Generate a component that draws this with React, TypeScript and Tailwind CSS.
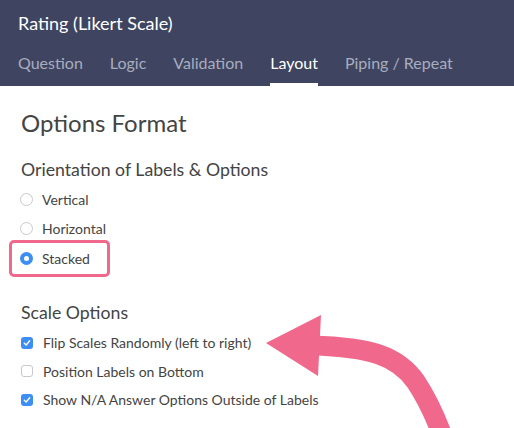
import React from 'react';

const tabs = ['Question', 'Logic', 'Validation', 'Layout', 'Piping / Repeat'];

const Radio = ({ checked = false }: { checked?: boolean }) =>
  checked ? (
    <span className="w-[13px] h-[13px] rounded-full bg-[#3c8ef2] flex items-center justify-center">
      <span className="w-[5px] h-[5px] rounded-full bg-white" />
    </span>
  ) : (
    <span className="w-[13px] h-[13px] rounded-full border border-[#c9c9c9] bg-white" />
  );

const Check = ({ checked = false }: { checked?: boolean }) =>
  checked ? (
    <span className="w-[12px] h-[12px] rounded-[3px] bg-[#3c8ef2] flex items-center justify-center">
      <svg width="8" height="8" viewBox="0 0 8 8" fill="none">
        <path d="M1.3 4.2 L3.2 6 L6.7 1.8" stroke="white" strokeWidth="1.4" strokeLinecap="round" strokeLinejoin="round" />
      </svg>
    </span>
  ) : (
    <span className="w-[12px] h-[12px] rounded-[3px] border border-[#c9c9c9] bg-white" />
  );

export default function App() {
  return (
    <div className="relative w-[514px] h-[428px] overflow-hidden bg-white font-['Lato','Liberation_Sans',sans-serif]">
      <div className="bg-[#3f4560] px-[18px] pt-[12px] h-[86px]">
        <div className="text-white text-[18px] leading-[23px]">Rating (Likert Scale)</div>
        <div className="flex gap-[27px] mt-[17px] text-[16px] leading-[22px]">
          {tabs.map((t) => (
            <div
              key={t}
              className={`pb-[9px] border-b-[3px] ${t === 'Layout' ? 'border-white text-white' : 'border-transparent text-[#a7adbf]'}`}
            >
              {t}
            </div>
          ))}
        </div>
      </div>

      <div className="px-[21px] pt-[23px] text-[#444]">
        <div className="text-[24px] leading-[28px]">Options Format</div>
        <div className="text-[17.7px] leading-[24px] mt-[21px]">Orientation of Labels &amp; Options</div>
        <div className="mt-[2px] text-[14px]">
          <div className="flex items-center gap-[9px] h-[30px] -ml-px">
            <Radio />
            <span>Vertical</span>
          </div>
          <div className="flex items-center gap-[9px] h-[29px] -ml-px">
            <Radio />
            <span>Horizontal</span>
          </div>
          <div className="relative flex items-center gap-[9px] h-[30px] -ml-px">
            <Radio checked />
            <span>Stacked</span>
            <span className="absolute left-[-11px] top-[-3px] w-[101px] h-[37px] border-[3px] border-[#f0698c] rounded-[5px]" />
          </div>
        </div>
        <div className="text-[17.7px] leading-[24px] mt-[28px]">Scale Options</div>
        <div className="mt-[3px] text-[14px]">
          <div className="flex items-center gap-[10px] h-[29px]">
            <Check checked />
            <span>Flip Scales Randomly (left to right)</span>
          </div>
          <div className="flex items-center gap-[10px] h-[28px]">
            <Check />
            <span>Position Labels on Bottom</span>
          </div>
          <div className="flex items-center gap-[10px] h-[29px]">
            <Check checked />
            <span>Show N/A Answer Options Outside of Labels</span>
          </div>
        </div>
      </div>

      <svg className="absolute inset-0 pointer-events-none" width="514" height="428" viewBox="0 0 514 428">
        <path d="M312 345.5 C370 347 398 356 416 382 C428 400 436 418 444 440" stroke="#f0698c" strokeWidth="20" fill="none" />
        <polygon points="266,343 321,315 318,376" fill="#f0698c" />
      </svg>
    </div>
  );
}
